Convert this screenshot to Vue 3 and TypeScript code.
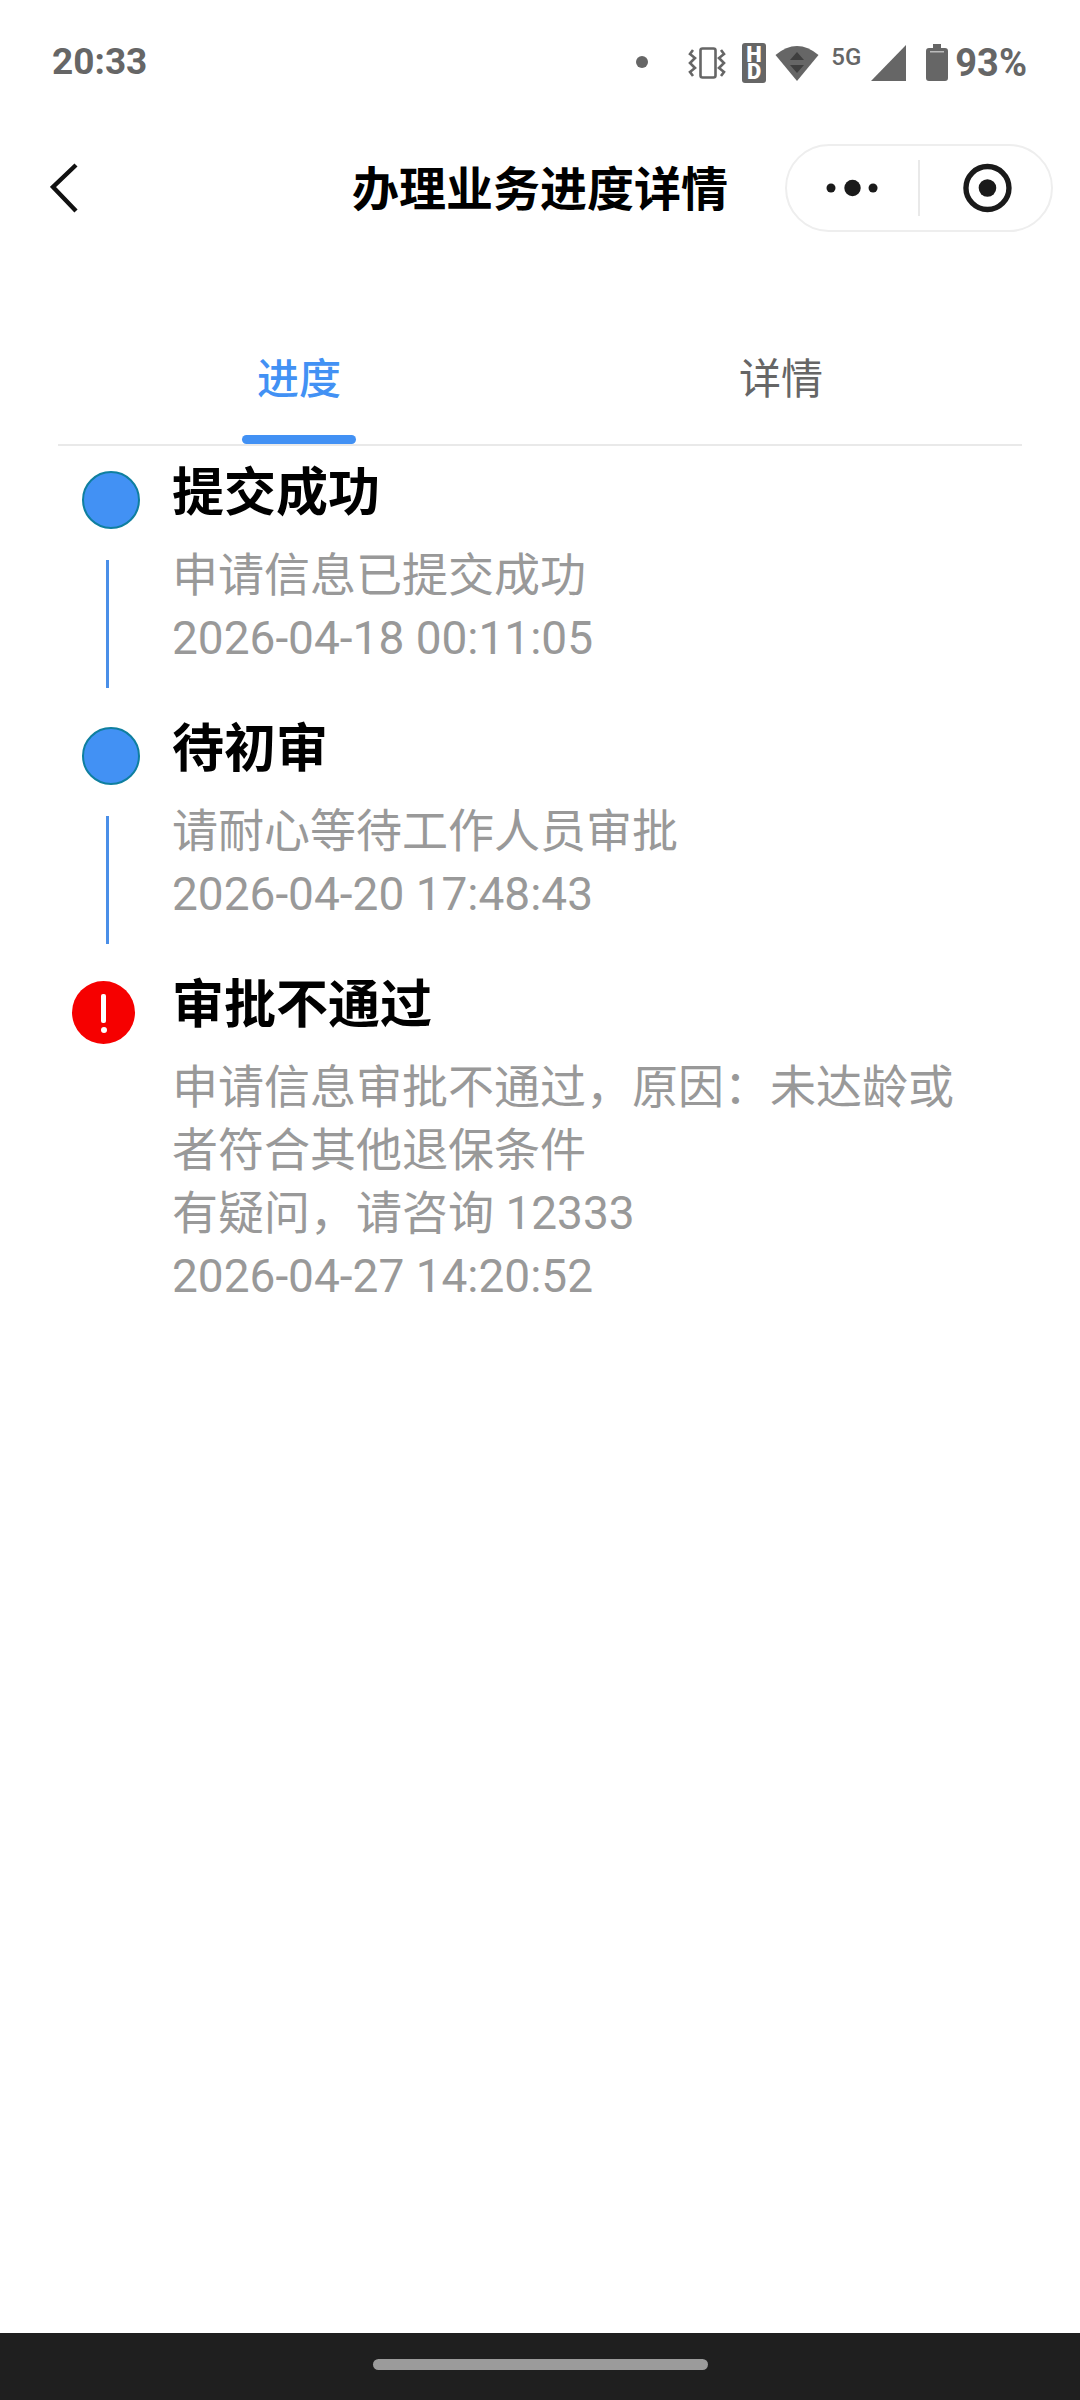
<script setup lang="ts">
interface Step {
  title: string;
  lines: string[];
  failed?: boolean;
}

const steps: Step[] = [
  { title: '提交成功', lines: ['申请信息已提交成功', '2026-04-18 00:11:05'] },
  { title: '待初审', lines: ['请耐心等待工作人员审批', '2026-04-20 17:48:43'] },
  {
    title: '审批不通过',
    lines: ['申请信息审批不通过，原因：未达龄或者符合其他退保条件', '有疑问，请咨询 12333', '2026-04-27 14:20:52'],
    failed: true,
  },
];
</script>

<template>
  <div class="page">
    <div class="status-bar">
      <span class="time">20:33</span>
      <div class="status-icons">
        <span class="dot"></span>
        <svg class="ic-vibrate" width="38" height="32" viewBox="0 0 38 32" fill="none" stroke="#666" stroke-width="2.6">
          <rect x="12.5" y="1.5" width="15" height="29" rx="2" />
          <path d="M5 3 L2 7 L7 11 L2 16 L7 21 L2 25 L5 29" />
          <path d="M33 3 L36 7 L31 11 L36 16 L31 21 L36 25 L33 29" />
        </svg>
        <svg class="ic-hd" width="24" height="40" viewBox="0 0 24 40">
          <rect width="24" height="40" rx="3" fill="#666" />
          <text x="12" y="18.5" text-anchor="middle" class="hd-text">H</text>
          <text x="12" y="36" text-anchor="middle" class="hd-text">D</text>
        </svg>
        <svg class="ic-wifi" width="44" height="36" viewBox="0 0 44 36">
          <path d="M0.5 10 Q22 -8 43.5 10 L22 36 Z" fill="#666" />
          <path d="M22 7 L29 15 H15 Z M22 28 L29 20 H15 Z" fill="#3f3f3f" />
        </svg>
        <span class="net">5G</span>
        <svg class="ic-signal" width="35" height="36" viewBox="0 0 35 36">
          <path d="M0 36 L35 0 V36 Z" fill="#666" />
        </svg>
        <svg class="ic-battery" width="22" height="37" viewBox="0 0 22 37">
          <path d="M7 0 H15 V4 H19 Q22 4 22 7 V34 Q22 37 19 37 H3 Q0 37 0 34 V7 Q0 4 3 4 H7 Z" fill="#666" />
          <rect x="4" y="7" width="14" height="1.5" fill="#bbb" />
        </svg>
        <span class="percent">93%</span>
      </div>
    </div>

    <div class="nav-bar">
      <svg class="back" width="30" height="52" viewBox="0 0 30 52" fill="none" stroke="#111" stroke-width="4.4">
        <path d="M26 3 L3 25 L26 49" />
      </svg>
      <h1 class="nav-title">办理业务进度详情</h1>
      <div class="capsule">
        <svg class="capsule-more" width="134" height="60" viewBox="0 0 134 60">
          <circle cx="45" cy="30" r="4.6" fill="#1a1a1a" />
          <circle cx="67" cy="30" r="8.4" fill="#1a1a1a" />
          <circle cx="88" cy="30" r="4.6" fill="#1a1a1a" />
        </svg>
        <span class="capsule-sep"></span>
        <svg class="capsule-close" width="134" height="60" viewBox="0 0 134 60">
          <circle cx="69" cy="30" r="22" fill="none" stroke="#1a1a1a" stroke-width="5.5" />
          <circle cx="69" cy="30" r="9" fill="#1a1a1a" />
        </svg>
      </div>
    </div>

    <div class="tabs">
      <div class="tab active">进度<span class="tab-bar"></span></div>
      <div class="tab">详情</div>
    </div>

    <div class="timeline">
      <div v-for="(step, i) in steps" :key="step.title" class="step">
        <div class="marker">
          <span v-if="step.failed" class="node-fail">
            <span class="bang-stem"></span>
            <span class="bang-dot"></span>
          </span>
          <template v-else>
            <span class="node"></span>
            <span v-if="i < steps.length - 1" class="line"></span>
          </template>
        </div>
        <div class="content">
          <div class="title">{{ step.title }}</div>
          <div class="desc">
            <div v-for="line in step.lines" :key="line">{{ line }}</div>
          </div>
        </div>
      </div>
    </div>

    <div class="spacer"></div>
    <div class="home-bar"><span class="home-pill"></span></div>
  </div>
</template>

<style>
html,
body {
  margin: 0;
  background: #fff;
}
</style>

<style scoped>
.page {
  width: 1080px;
  height: 2400px;
  display: flex;
  flex-direction: column;
  background: #fff;
  font-family: Roboto, "Noto Sans CJK SC", sans-serif;
}

.status-bar {
  height: 122px;
  box-sizing: border-box;
  padding: 0 53px 0 52px;
  display: flex;
  justify-content: space-between;
  align-items: flex-start;
  color: #666;
}

.time {
  margin-top: 40px;
  font-size: 37px;
  line-height: 44px;
  font-weight: 700;
}

.status-icons {
  display: flex;
  align-items: flex-start;
  margin-top: 43px;
}

.dot {
  width: 12px;
  height: 12px;
  margin: 13px 0 0 0;
  border-radius: 50%;
  background: #666;
}

.ic-vibrate {
  margin: 4px 0 0 40px;
}

.ic-hd {
  margin-left: 16px;
}

.hd-text {
  font-family: Roboto, sans-serif;
  font-size: 22px;
  font-weight: 900;
  fill: #fff;
}

.ic-wifi {
  margin: 2px 0 0 9px;
}

.net {
  margin: 2px 0 0 12px;
  width: 34px;
  font-size: 24px;
  line-height: 24px;
  font-weight: 500;
}

.ic-signal {
  margin: 2px 0 0 6px;
}

.ic-battery {
  margin: 1px 0 0 20px;
}

.percent {
  margin: -2px 0 0 7px;
  font-size: 38px;
  line-height: 44px;
  font-weight: 700;
}

.nav-bar {
  position: relative;
  margin-top: 22px;
  height: 88px;
  display: flex;
  align-items: center;
  justify-content: space-between;
  padding: 0 27px 0 50px;
}

.back {
  display: block;
}

.nav-title {
  margin: 0;
  position: absolute;
  left: 0;
  right: 0;
  top: 2px;
  text-align: center;
  font-size: 47px;
  line-height: 88px;
  font-weight: 700;
  color: #000;
}

.capsule {
  width: 268px;
  height: 88px;
  box-sizing: border-box;
  border: 2px solid #eeeeee;
  border-radius: 44px;
  display: flex;
  align-items: center;
  background: #fff;
  position: relative;
}

.capsule-sep {
  width: 2px;
  height: 56px;
  background: #e9e9e9;
}

.tabs {
  margin: 98px 58px 0;
  height: 116px;
  box-sizing: border-box;
  border-bottom: 2px solid #e9e9e9;
  display: flex;
}

.tab {
  position: relative;
  width: 482px;
  text-align: center;
  font-size: 42px;
  line-height: 60px;
  padding-top: 20px;
  color: #666;
}

.tab.active {
  color: #4291f4;
  font-weight: 500;
}

.tab-bar {
  position: absolute;
  left: 184px;
  bottom: 0;
  width: 114px;
  height: 9px;
  border-radius: 5px;
  background: #4291f4;
}

.timeline {
  padding: 14px 72px 0;
}

.step {
  display: flex;
  padding-bottom: 28px;
}

.marker {
  width: 100px;
  flex-shrink: 0;
  display: flex;
  flex-direction: column;
}

.node {
  width: 58px;
  height: 58px;
  box-sizing: border-box;
  margin: 11px 0 0 10px;
  border: 2px solid #0f7f9f;
  border-radius: 50%;
  background: #4291f4;
}

.line {
  width: 3px;
  height: 128px;
  margin: 31px 0 0 34px;
  background: #4a8fe8;
}

.node-fail {
  width: 63px;
  height: 63px;
  margin-top: 9px;
  border-radius: 50%;
  background: #f60000;
  display: flex;
  flex-direction: column;
  align-items: center;
}

.bang-stem {
  width: 5px;
  height: 29px;
  margin-top: 13px;
  border-radius: 2px;
  background: #fff;
}

.bang-dot {
  width: 6px;
  height: 6px;
  margin-top: 4px;
  border-radius: 50%;
  background: #fff;
}

.content {
  width: 790px;
}

.title {
  margin-top: 2px;
  font-size: 52px;
  line-height: 63px;
  font-weight: 700;
  color: #000;
}

.desc {
  margin-top: 19px;
  font-size: 46px;
  line-height: 63px;
  color: #999;
}

.spacer {
  flex: 1;
}

.home-bar {
  height: 67px;
  background: #1f1f1f;
  display: flex;
  justify-content: center;
  align-items: center;
}

.home-pill {
  width: 335px;
  height: 11px;
  margin-bottom: 5px;
  border-radius: 6px;
  background: #9b9b9b;
}
</style>
